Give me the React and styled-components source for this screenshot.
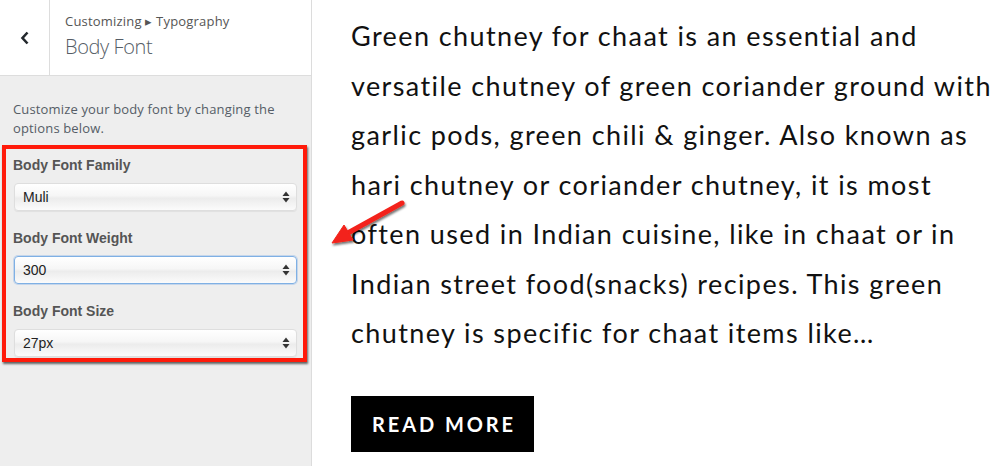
import React from "react";
import styled, { createGlobalStyle } from "styled-components";

const GlobalStyle = createGlobalStyle`
  html, body { margin: 0; padding: 0; background: #fff; }
  body { font-family: "Liberation Sans", Arial, sans-serif; }
`;

const Page = styled.div`
  position: relative;
  width: 1000px;
  height: 466px;
  display: flex;
  overflow: hidden;
  background: #fff;
`;

const Panel = styled.aside`
  width: 311px;
  flex-shrink: 0;
  background: #eeeeee;
  border-right: 1px solid #dcdcdc;
  display: flex;
  flex-direction: column;
`;

const Header = styled.div`
  height: 75px;
  display: flex;
  background: #fff;
  border-bottom: 1px solid #dddddd;
`;

const BackButton = styled.div`
  width: 49px;
  border-right: 1px solid #dddddd;
  display: flex;
  align-items: center;
  justify-content: center;
`;

const Titles = styled.div`
  padding: 12px 0 0 15px;
  color: #555d66;
`;

const Crumb = styled.div`
  font-family: "Open Sans", sans-serif;
  font-size: 13px;
  line-height: 19px;
  letter-spacing: 0.2px;
  color: #555;
`;

const Title = styled.div`
  font-family: "Open Sans", sans-serif;
  font-size: 20px;
  font-weight: 300;
  line-height: 27px;
  margin-top: 2px;
  color: #555d66;
  letter-spacing: -0.4px;
`;

const Body = styled.div`
  padding: 24px 4px 0 2px;
`;

const Description = styled.p`
  margin: 0 0 7px 11px;
  font-family: "Open Sans", sans-serif;
  font-size: 13px;
  letter-spacing: 0.15px;
  line-height: 19px;
  color: #555d66;
`;

const Highlight = styled.div`
  border: 4px solid #ff1a0a;
  box-shadow: 1px 2px 2px rgba(40, 40, 40, 0.7);
  padding: 7px 6px 1px 7px;
  display: flex;
  flex-direction: column;
`;

const Label = styled.div`
  font-size: 14px;
  font-weight: bold;
  line-height: 18px;
  color: #555;
  margin-bottom: 9px;
`;

const SelectBox = styled.div`
  height: 28px;
  margin: 0 0 18px 1px;
  box-sizing: border-box;
  border-radius: 4px;
  border: 1px solid ${(p) => (p.focused ? "#7fb0e4" : "#dedede")};
  box-shadow: ${(p) =>
    p.focused ? "0 0 0 1px rgba(120,170,230,0.35)" : "0 1px 1px rgba(0,0,0,0.06)"};
  background: linear-gradient(#ffffff, #f6f6f6 45%, #ececec 55%, #fbfbfb);
  display: flex;
  align-items: center;
  justify-content: space-between;
  padding: 0 6px 0 8px;
  font-size: 14px;
  color: #222;
  &:last-child { margin-bottom: 0; }
`;

const Content = styled.main`
  flex: 1;
  padding: 11px 0 0 39px;
`;

const Text = styled.p`
  margin: 0;
  font-family: Lato, "Open Sans", sans-serif;
  font-size: 27px;
  letter-spacing: 1.4px;
  line-height: 49.5px;
  color: #111;
  white-space: nowrap;
`;

const ReadMore = styled.button`
  margin-top: 38px;
  width: 183px;
  height: 56px;
  border: none;
  background: #000;
  color: #fff;
  font-family: Lato, sans-serif;
  font-weight: 700;
  font-size: 20px;
  letter-spacing: 2.9px;
  padding: 0 0 0 3px;
`;

const Arrow = styled.svg`
  position: absolute;
  left: 320px;
  top: 188px;
  pointer-events: none;
`;

const Chevron = () => (
  <svg width="12" height="16" viewBox="0 0 12 16">
    <polyline points="8.5,2.5 3.5,8 8.5,13.5" fill="none" stroke="#23282d" strokeWidth="2.6" />
  </svg>
);

const UpDown = () => (
  <svg width="8" height="12" viewBox="0 0 8 12">
    <polygon points="4,0.5 7.5,5 0.5,5" fill="#333" />
    <polygon points="0.5,7 7.5,7 4,11.5" fill="#333" />
  </svg>
);

const Select = ({ value, focused }) => (
  <SelectBox focused={focused}>
    <span>{value}</span>
    <UpDown />
  </SelectBox>
);

const lines = [
  "Green chutney for chaat is an essential and",
  "versatile chutney of green coriander ground with",
  "garlic pods, green chili & ginger. Also known as",
  "hari chutney or coriander chutney, it is most",
  "often used in Indian cuisine, like in chaat or in",
  "Indian street food(snacks) recipes. This green",
  "chutney is specific for chaat items like…",
];

export default function App() {
  return (
    <Page>
      <GlobalStyle />
      <Panel>
        <Header>
          <BackButton>
            <Chevron />
          </BackButton>
          <Titles>
            <Crumb>Customizing ▸ Typography</Crumb>
            <Title>Body Font</Title>
          </Titles>
        </Header>
        <Body>
          <Description>
            Customize your body font by changing the
            <br />
            options below.
          </Description>
          <Highlight>
            <Label>Body Font Family</Label>
            <Select value="Muli" />
            <Label>Body Font Weight</Label>
            <Select value="300" focused />
            <Label>Body Font Size</Label>
            <Select value="27px" />
          </Highlight>
        </Body>
      </Panel>
      <Content>
        <Text>
          {lines.map((l, i) => (
            <React.Fragment key={i}>
              {l}
              {i < lines.length - 1 && <br />}
            </React.Fragment>
          ))}
        </Text>
        <ReadMore>READ MORE</ReadMore>
      </Content>
      <Arrow width="100" height="70" viewBox="0 0 100 70">
        <defs>
          <filter id="sh" x="-20%" y="-20%" width="140%" height="140%">
            <feDropShadow dx="1" dy="2" stdDeviation="1.2" floodColor="#000" floodOpacity="0.55" />
          </filter>
        </defs>
        <g filter="url(#sh)" fill="#f3241a" stroke="#f3241a">
          <line x1="82" y1="15" x2="26" y2="46" strokeWidth="5" strokeLinecap="round" />
          <polygon points="12,55 24,37 33,52" strokeWidth="1" strokeLinejoin="round" />
        </g>
      </Arrow>
    </Page>
  );
}
